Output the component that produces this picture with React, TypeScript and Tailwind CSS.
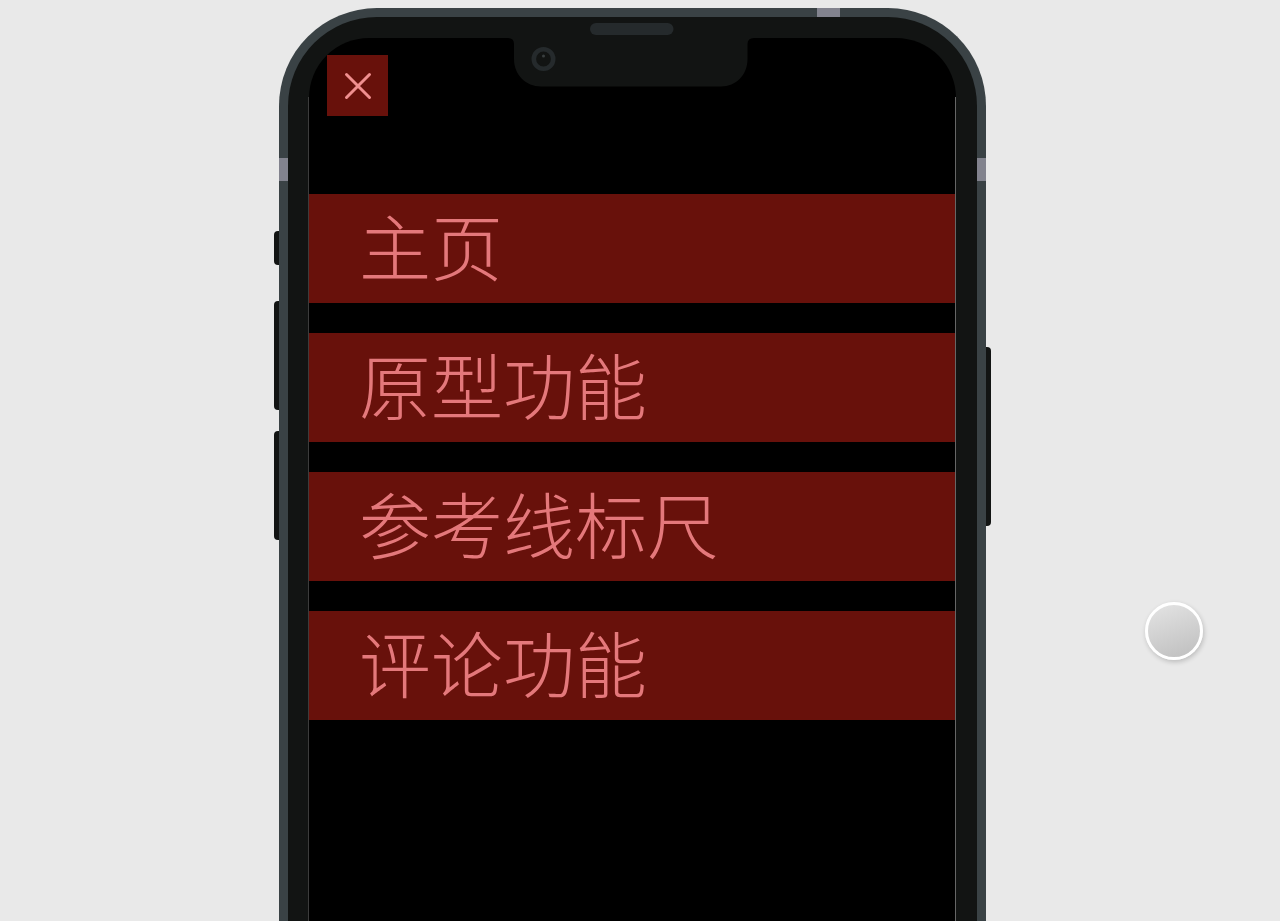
import React from 'react';

interface MenuItem {
  label: string;
  href: string;
}

const menuItems: MenuItem[] = [
  { label: '主页', href: '#home' },
  { label: '原型功能', href: '#prototype' },
  { label: '参考线标尺', href: '#guides' },
  { label: '评论功能', href: '#comments' },
];

const Notch: React.FC = () => (
  <svg
    className="absolute inset-x-0 top-0 mx-auto"
    width="265"
    height="73"
    viewBox="0 0 265 73"
    aria-hidden="true"
  >
    <path
      d="M0 18 H0 V21 H8 Q14 21 14 27 V42 C14 58 26 69.500 41 69.500 H221 C236 69.500 247.500 58 247.500 42 V27 Q247.500 21 254 21 H265 V18 Z"
      fill="#121413"
    />
    <rect x="90" y="6" width="83.500" height="12" rx="6" fill="#252a2c" />
    <circle cx="43.500" cy="42" r="9.700" fill="none" stroke="#252a2c" strokeWidth="4.600" />
    <circle cx="43.500" cy="39" r="1.500" fill="#3a3f40" />
  </svg>
);

// Antenna bands drawn over the metal frame
const AntennaBands: React.FC = () => (
  <div aria-hidden="true">
    <div className="absolute inset-x-0 -top-[9px] flex justify-end pr-[137px]">
      <span className="h-[9px] w-[23px] bg-[#82838e]" />
    </div>
    <div className="absolute -inset-x-[9px] top-[141px] flex justify-between">
      <span className="h-[23px] w-[9px] bg-[#82838e]" />
      <span className="h-[23px] w-[9px] bg-[#82838e]" />
    </div>
  </div>
);

const PhoneScreen: React.FC = () => (
  <div className="flex-1 overflow-hidden rounded-t-[60px] bg-black">
    <button
      type="button"
      aria-label="关闭"
      className="mt-[17px] ml-[18px] flex size-[61px] items-center justify-center bg-[#68110b]"
    >
      <svg width="28" height="28" viewBox="0 0 28 28" fill="none" stroke="#f08f8f" strokeWidth="3" strokeLinecap="round">
        <path d="M2.500 2.500 L25.500 25.500 M25.500 2.500 L2.500 25.500" />
      </svg>
    </button>
    <nav className="mt-[78px]">
      <ul className="flex flex-col gap-[30px]">
        {menuItems.map((item) => (
          <li key={item.href}>
            <a
              href={item.href}
              className="flex h-[109px] items-center bg-[#68110b] pb-[10px] pl-[50px] text-[72px] leading-none font-light text-[#e4787b]"
            >
              {item.label}
            </a>
          </li>
        ))}
      </ul>
    </nav>
  </div>
);

const App: React.FC = () => {
  return (
    <main className="relative flex min-h-screen justify-center overflow-hidden bg-[#e9e9e9] pt-2 pr-[15px] font-['Noto_Sans_CJK_SC',sans-serif]">
      <div className="flex w-[5px] flex-col pt-[223px]" aria-hidden="true">
        <span className="h-[34px] rounded-l bg-[#121413]" />
        <span className="mt-9 h-[109px] rounded-l bg-[#121413]" />
        <span className="mt-[21px] h-[109px] rounded-l bg-[#121413]" />
      </div>
      <div className="relative flex max-w-[707px] flex-1 flex-col rounded-t-[98px] border-x-[9px] border-t-[9px] border-[#3a4245] bg-[#121413] px-[21px] pt-[21px]">
        <PhoneScreen />
        <AntennaBands />
        <div className="pointer-events-none absolute top-20 right-[21px] bottom-0 left-5 border-x border-r-[#666666] border-l-[#3c3c3c]" />
        <Notch />
      </div>
      <div className="flex w-[5px] flex-col pt-[339px]" aria-hidden="true">
        <span className="h-[179px] rounded-r bg-[#121413]" />
      </div>
      <button
        type="button"
        aria-label="辅助按钮"
        className="absolute top-[602px] right-[77px] size-[58px] rounded-full border-[3px] border-white bg-linear-160 from-[#e6e6e6] to-[#bcbcbc] bg-origin-border shadow-[1px_2px_5px_rgba(0,0,0,0.2)]"
      />
    </main>
  );
};

export default App;
